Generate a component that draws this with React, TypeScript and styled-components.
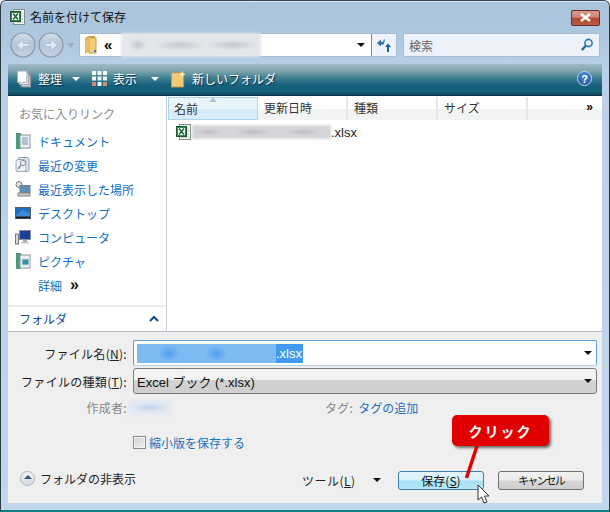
import styled, { createGlobalStyle } from "styled-components";

const GlobalStyle = createGlobalStyle`
  html, body { margin: 0; padding: 0; background: #fff; }
  * { box-sizing: border-box; }
  body { font-family: "Noto Sans CJK JP", "Liberation Sans", sans-serif; font-size: 12px; }
`;

function ExcelIcon({ size = 16 }: { size?: number }) {
  return (
    <svg width={size} height={size} viewBox="0 0 16 16">
      <rect x="3.500" y="0.500" width="11" height="15" fill="#f4f6f4" stroke="#7f8f8a" />
      <path d="M5 4h8M5 7h8M5 10h8M5 13h8M9 2v12" stroke="#b9c6c0" />
      <rect x="0.500" y="2.500" width="10" height="10" fill="#2f8a4c" stroke="#1d5a30" />
      <rect x="2" y="4" width="7" height="7" fill="#fff" />
      <path d="M3 4.500l5 6M8 4.500l-5 6" stroke="#14662f" strokeWidth="1.5" />
    </svg>
  );
}

function FolderIcon() {
  return (
    <svg width="17" height="19" viewBox="0 0 17 19">
      <path d="M1 2l4-2h6v16H1z" fill="#c9a04e" />
      <path d="M5 2h7v15H5z" fill="#f3cf79" stroke="#c69c4d" />
      <path d="M1 3l5-2v15l-5 2z" fill="#e6bd64" />
      <rect x="10" y="14" width="2" height="2" fill="#3a7fd0" />
    </svg>
  );
}

function NavCircle({ flip }: { flip?: boolean }) {
  return (
    <svg width="26" height="26" viewBox="0 0 26 26">
      <defs>
        <linearGradient id="navg" x1="0" y1="0" x2="0" y2="1">
          <stop offset="0" stopColor="#d3deea" />
          <stop offset="0.5" stopColor="#b4c5d8" />
          <stop offset="1" stopColor="#c3d2e2" />
        </linearGradient>
      </defs>
      <circle cx="13" cy="13" r="12" fill="url(#navg)" stroke="#8b97a4" strokeWidth="1.2" />
      <path
        d={flip ? "M7 11.500h6v-4l6 5.500-6 5.500v-4H7z" : "M19 11.500h-6v-4L7 13l6 5.500v-4h6z"}
        fill="#e3eaf2"
        stroke="#a5b5c6"
        strokeWidth="0.6"
      />
    </svg>
  );
}

function Search() {
  return (
    <svg width="14" height="14" viewBox="0 0 14 14">
      <circle cx="8.500" cy="5" r="3.600" fill="#e8f2fb" stroke="#2f79b5" strokeWidth="1.6" />
      <path d="M5.800 7.800L1.800 12" stroke="#1d5f96" strokeWidth="2.2" />
    </svg>
  );
}

function Refresh() {
  return (
    <svg width="16" height="16" viewBox="0 0 16 16">
      <path d="M1 6l4-3.500V5h2l1-3 1 1-1.500 4.500H5v2z" fill="#2b6fae" />
      <path d="M15 10l-3-3.500L9 10h2v5h2v-5z" fill="#1f5f9c" />
    </svg>
  );
}

function SideIcon({ kind }: { kind: string }) {
  if (kind === "doc" || kind === "pic") {
    return (
      <svg width="16" height="16" viewBox="0 0 16 16">
        <rect x="1" y="0" width="5" height="16" fill="#4e9a78" />
        <rect x="5" y="2" width="10" height="13" fill="#eef2f4" stroke="#8b98a2" />
        {kind === "doc" ? (
          <path d="M7 5h6M7 7h6M7 9h6M7 11h6" stroke="#6f8fa8" />
        ) : (
          <rect x="7" y="6" width="7" height="6" fill="#3a8fa8" stroke="#cfe0e6" />
        )}
      </svg>
    );
  }
  if (kind === "recent") {
    return (
      <svg width="16" height="16" viewBox="0 0 16 16">
        <rect x="3" y="0.500" width="11" height="14" rx="2" fill="#dfe7f0" stroke="#8c9db2" />
        <rect x="1" y="2.500" width="10" height="12" rx="2" fill="#eef3f8" stroke="#98a8ba" />
        <circle cx="8" cy="6" r="2.600" fill="none" stroke="#7d8fa4" />
        <path d="M6 8l-3 4" stroke="#7d8fa4" strokeWidth="1.4" />
      </svg>
    );
  }
  if (kind === "place") {
    return (
      <svg width="16" height="16" viewBox="0 0 16 16">
        <circle cx="4" cy="3.500" r="3" fill="#dfe2e4" stroke="#777" />
        <rect x="5" y="4.500" width="10" height="7" fill="#5d8fb8" stroke="#7a7f84" />
        <rect x="3" y="12" width="12" height="3" fill="#c8ccd0" stroke="#808488" />
      </svg>
    );
  }
  if (kind === "desk") {
    return (
      <svg width="16" height="16" viewBox="0 0 16 16">
        <rect x="0.500" y="2.500" width="15" height="11" fill="#1f6fc0" stroke="#555e66" />
        <path d="M1 11l6-6 8 3v5H1z" fill="#3b8bd6" />
        <rect x="1" y="11.500" width="14" height="2" fill="#222" />
      </svg>
    );
  }
  return (
    <svg width="16" height="16" viewBox="0 0 16 16">
      <rect x="0.500" y="5" width="3" height="10" fill="#d8dadc" stroke="#777" />
      <rect x="4.500" y="1.500" width="11" height="9" fill="#1b3f9a" stroke="#8a8f94" />
      <rect x="8" y="11" width="4" height="2" fill="#a8acb0" />
      <rect x="6" y="13" width="8" height="1.500" fill="#c6c9cc" />
    </svg>
  );
}

const items = [
  { kind: "doc", label: "ドキュメント" },
  { kind: "recent", label: "最近の変更" },
  { kind: "place", label: "最近表示した場所" },
  { kind: "desk", label: "デスクトップ" },
  { kind: "pc", label: "コンピュータ" },
  { kind: "pic", label: "ピクチャ" },
];

const columns = [
  { label: "名前", active: true },
  { label: "更新日時" },
  { label: "種類" },
  { label: "サイズ" },
];

export default function App() {
  return (
    <>
      <GlobalStyle />
      <Window>
        <TitleBar>
          <ExcelIcon />
          <Title>名前を付けて保存</Title>
          <CloseButton>
            <svg width="13" height="9" viewBox="0 0 13 9">
              <path d="M2 1l9 7M11 1L2 8" stroke="#fff" strokeWidth="2.4" />
            </svg>
          </CloseButton>
        </TitleBar>

        <NavBar>
          <NavButtons>
            <NavCircle />
            <NavCircle flip />
            <SmallCaret />
          </NavButtons>
          <AddressBox>
            <FolderIcon />
            <Chevrons>«</Chevrons>
            <BlurredPath />
            <AddressEnd>
              <DarkCaret />
            </AddressEnd>
            <RefreshCell>
              <Refresh />
            </RefreshCell>
          </AddressBox>
          <SearchBox>
            <span>検索</span>
            <Search />
          </SearchBox>
        </NavBar>

        <Toolbar>
          <ToolItem>
            <svg width="15" height="18" viewBox="0 0 16 18">
              <rect x="4.500" y="5.500" width="10" height="12" fill="#c9ccd0" stroke="#8d9298" />
              <rect x="2.500" y="3" width="10" height="12" fill="#e4e6e9" stroke="#9da2a8" />
              <rect x="0.500" y="0.500" width="10" height="12" fill="#fff" stroke="#aab0b6" />
            </svg>
            <span>整理</span>
            <WhiteCaret $left={4} />
          </ToolItem>
          <ToolItem>
            <svg width="15" height="15" viewBox="0 0 15 15">
              <path d="M0 0h4v4H0zM5.500 0h4v4h-4zM11 0h4v4h-4zM0 5.500h4v4H0zM5.500 5.500h4v4h-4zM11 5.500h4v4h-4zM0 11h4v4H0zM5.500 11h4v4h-4zM11 11h4v4h-4z" fill="#f4f4f4" />
              <path d="M11 11h4v4h-4zM0 11h4v4H0z" fill="#d28a78" />
            </svg>
            <span>表示</span>
            <WhiteCaret $left={8} />
          </ToolItem>
          <ToolItem>
            <svg width="15" height="18" viewBox="0 0 16 18">
              <rect x="0.500" y="2.500" width="13" height="15" fill="#f0cb74" stroke="#c39a4a" />
              <path d="M12 0l1 3 3 1-3 1-1 3-1-3-3-1 3-1z" fill="#fff3c4" />
            </svg>
            <span>新しいフォルダ</span>
          </ToolItem>
          <HelpIcon>?</HelpIcon>
        </Toolbar>

        <Content>
          <Sidebar>
            <SideTitle>お気に入りリンク</SideTitle>
            <SideList>
              {items.map((item) => (
                <SideItem key={item.kind}>
                  <SideIcon kind={item.kind} />
                  <span>{item.label}</span>
                </SideItem>
              ))}
              <SideItem>
                <IconSpacer />
                <span>詳細</span>
                <MoreMark>»</MoreMark>
              </SideItem>
            </SideList>
            <FolderToggle>
              <span>フォルダ</span>
              <svg width="10" height="7" viewBox="0 0 10 7">
                <path d="M1 6l4-4 4 4" fill="none" stroke="#0a4a96" strokeWidth="2" />
              </svg>
            </FolderToggle>
          </Sidebar>
          <FileArea>
            <Header>
              {columns.map((col) => (
                <HeaderCell key={col.label} $active={col.active}>
                  {col.active && <SortMark />}
                  {col.label}
                </HeaderCell>
              ))}
              <HeaderRest>»</HeaderRest>
            </Header>
            <FileRow>
              <ExcelIcon />
              <BlurredName />
              <span>.xlsx</span>
            </FileRow>
          </FileArea>
        </Content>

        <Bottom>
          <FormRow>
            <FieldLabel>
              ファイル名(<u>N</u>):
            </FieldLabel>
            <NameInput>
              <Selection>
                <SelectionBlur />
                <span>.xlsx</span>
              </Selection>
              <DarkCaret />
            </NameInput>
          </FormRow>
          <FormRow>
            <FieldLabel>
              ファイルの種類(<u>T</u>):
            </FieldLabel>
            <TypeSelect>
              <span>Excel ブック (*.xlsx)</span>
              <DarkCaret />
            </TypeSelect>
          </FormRow>
          <MetaRow>
            <MetaLabel>作成者:</MetaLabel>
            <MetaAuthor />
            <MetaTag>タグ:</MetaTag>
            <LinkText>タグの追加</LinkText>
          </MetaRow>
          <ThumbRow>
            <Check />
            <LinkText>縮小版を保存する</LinkText>
          </ThumbRow>
          <ActionRow>
            <HideFolders>
              <HideIcon />
              <span>フォルダの非表示</span>
            </HideFolders>
            <Tools>
              <span>
                ツール(<u>L</u>)
              </span>
              <DarkCaret />
            </Tools>
            <DialogButton $primary>
              保存(<u>S</u>)
            </DialogButton>
            <DialogButton>
              <CancelText>キャンセル</CancelText>
            </DialogButton>
          </ActionRow>
        </Bottom>

        <Callout>クリック</Callout>
        <CalloutLine width="30" height="40" viewBox="0 0 30 40">
          <path d="M20 0L9.500 32" stroke="#e00000" strokeWidth="3.500" />
        </CalloutLine>
        <Cursor width="13" height="20" viewBox="0 0 13 20">
          <path d="M1 1v15l3.500-3 2.500 6 3-1-2.500-6H12z" fill="#fff" stroke="#333" />
        </Cursor>
      </Window>
    </>
  );
}

const Window = styled.div`
  position: relative;
  width: 610px;
  height: 512px;
  overflow: hidden;
  padding: 0 7px;
  display: flex;
  flex-direction: column;
  border: 1px solid #2c3a40;
  border-top-color: #3a4450;
  border-bottom: 2px solid #0f7f86;
  border-radius: 6px 6px 0 0;
  background: linear-gradient(#a9c3dd 0, #afc8e2 40px, #b9d0e8 70px, #c2d6ec 100%);
  box-shadow: inset 0 1px 0 #dfe9f3;
`;

const TitleBar = styled.div`
  height: 31px;
  display: flex;
  align-items: center;
  gap: 4px;
  padding: 0 2px;
  color: #111;
`;

const Title = styled.span`
  flex: 1;
`;

const CloseButton = styled.div`
  width: 29px;
  height: 16px;
  margin-top: 2px;
  display: flex;
  align-items: center;
  justify-content: center;
  border: 1px solid #6a2a28;
  border-radius: 2px;
  background: linear-gradient(#d99a8f 0, #d08478 45%, #b04a30 50%, #b85a40 100%);
`;

const NavBar = styled.div`
  height: 26px;
  display: flex;
`;

const NavButtons = styled.div`
  width: 71px;
  display: flex;
  align-items: center;
  gap: 2px;
  padding-left: 2px;
`;

const SmallCaret = styled.i`
  width: 0;
  height: 0;
  margin-left: 1px;
  border: 4px solid transparent;
  border-top: 5px solid #a0aebd;
  border-bottom: 0;
`;

const AddressBox = styled.div`
  width: 318px;
  height: 24px;
  margin: 1px 6px 0 0;
  display: flex;
  align-items: center;
  padding-left: 4px;
  border: 1px solid #a8bbcf;
  border-radius: 2px;
  background: #fff;
`;

const Chevrons = styled.span`
  width: 17px;
  margin-left: 3px;
  font-family: "Liberation Sans", sans-serif;
  font-size: 15px;
  font-weight: bold;
  line-height: 14px;
`;

const BlurredPath = styled.div`
  width: 140px;
  height: 24px;
  background:
    radial-gradient(ellipse 9px 6px at 12% 50%, #c2c6cc, transparent),
    radial-gradient(ellipse 26px 5px at 42% 50%, #c2c6cc, transparent),
    radial-gradient(ellipse 26px 5px at 80% 50%, #c2c6cc, transparent),
    #e3e7ec;
  filter: blur(1px);
`;

const AddressEnd = styled.div`
  flex: 1;
  display: flex;
  justify-content: flex-end;
  padding-right: 6px;
`;

const RefreshCell = styled.div`
  width: 25px;
  height: 22px;
  display: flex;
  align-items: center;
  justify-content: center;
  border-left: 1px solid #7d8a98;
  background: #eef2fa;
`;

const SearchBox = styled.div`
  width: 197px;
  height: 24px;
  margin-top: 1px;
  display: flex;
  align-items: center;
  justify-content: space-between;
  padding: 0 5px;
  color: #666;
  border: 1px solid #a8bbcf;
  border-radius: 2px;
  background: #edf1fa;
`;

const Toolbar = styled.div`
  height: 32px;
  margin-top: 6px;
  display: flex;
  align-items: center;
  gap: 12px;
  padding: 0 9px 2px 9px;
  color: #fff;
  text-shadow: 1px 1px 1px #0b2c40;
  background: linear-gradient(#9fbcc6 0, #7fa5ae 22%, #3f7f90 45%, #17607c 68%, #15647a 85%, #0f4a62 100%);
  border-bottom: 1px solid #0b3040;
`;

const ToolItem = styled.div`
  display: flex;
  align-items: center;
  gap: 6px;
`;

const WhiteCaret = styled.i<{ $left: number }>`
  width: 0;
  height: 0;
  margin-left: ${(p) => p.$left}px;
  border: 4px solid transparent;
  border-top: 4px solid #fff;
  border-bottom: 0;
`;

const HelpIcon = styled.div`
  width: 15px;
  height: 15px;
  margin-left: auto;
  margin-right: 1px;
  display: flex;
  align-items: center;
  justify-content: center;
  border-radius: 50%;
  border: 1px solid #c7d8e8;
  background: radial-gradient(circle at 50% 30%, #4f8fd8, #1a4a9a);
  font-family: "Liberation Sans", sans-serif;
  font-size: 11px;
  font-weight: bold;
  text-shadow: none;
`;

const Content = styled.div`
  height: 235px;
  display: flex;
  background: #fff;
`;

const Sidebar = styled.div`
  width: 159px;
  display: flex;
  flex-direction: column;
  border-right: 1px solid #c9ced4;
`;

const SideTitle = styled.div`
  height: 33px;
  padding: 9px 0 0 11px;
  color: #8c8c8c;
`;

const SideList = styled.div`
  flex: 1;
  display: flex;
  flex-direction: column;
`;

const SideItem = styled.div`
  height: 24px;
  display: flex;
  align-items: center;
  gap: 7px;
  padding-left: 7px;
  color: #0f6fc6;
`;

const IconSpacer = styled.div`
  width: 16px;
`;

const MoreMark = styled.b`
  margin-left: 1px;
  color: #111;
  font-family: "Liberation Sans", sans-serif;
  font-size: 16px;
  line-height: 14px;
`;

const FolderToggle = styled.div`
  height: 26px;
  display: flex;
  align-items: center;
  justify-content: space-between;
  padding: 0 7px 2px 11px;
  color: #0a4a96;
  border-top: 2px solid #eeeeee;
`;

const FileArea = styled.div`
  flex: 1;
  display: flex;
  flex-direction: column;
`;

const Header = styled.div`
  height: 24px;
  display: flex;
  padding: 1px 0 0 1px;
`;

const HeaderCell = styled.div<{ $active?: boolean }>`
  position: relative;
  width: 90px;
  height: 23px;
  padding: 2px 0 0 6px;
  color: #333;
  border-right: 2px solid #e4e6e8;
  background: ${(p) =>
    p.$active
      ? "linear-gradient(#e9f4fb 0, #e9f4fb 50%, #d9ecf7 50%, #d9ecf7 100%)"
      : "linear-gradient(#fff 0, #fff 50%, #f2f3f3 50%, #f2f3f3 100%)"};
  ${(p) => (p.$active ? "border: 1px solid #a8d5ef; padding-left: 5px;" : "")}
`;

const SortMark = styled.i`
  position: absolute;
  top: 0;
  left: 40px;
  width: 0;
  height: 0;
  border: 4px solid transparent;
  border-top: 0;
  border-bottom: 4px solid #a8c4d4;
`;

const HeaderRest = styled.div`
  flex: 1;
  height: 23px;
  padding: 3px 9px 0 0;
  text-align: right;
  font-family: "Liberation Sans", sans-serif;
  font-size: 12px;
  font-weight: bold;
  background: linear-gradient(#fff 0, #fff 50%, #f2f3f3 50%, #f2f3f3 100%);
`;

const FileRow = styled.div`
  display: flex;
  align-items: center;
  height: 18px;
  margin-top: 3px;
  padding-left: 9px;
  font-family: "Liberation Sans", sans-serif;
  font-size: 13px;
  color: #222;
`;

const BlurredName = styled.div`
  width: 139px;
  height: 14px;
  background:
    radial-gradient(ellipse 14px 3px at 12% 50%, #b4b6ba, transparent),
    radial-gradient(ellipse 18px 3px at 44% 50%, #b4b6ba, transparent),
    radial-gradient(ellipse 18px 3px at 80% 50%, #b4b6ba, transparent),
    #d4d6da;
  filter: blur(1px);
`;

const Bottom = styled.div`
  height: 172px;
  padding: 8px 5px 0 5px;
  display: flex;
  flex-direction: column;
  gap: 2px;
  background: #efefef;
  border-top: 1px solid #b4c0ca;
`;

const FormRow = styled.div`
  display: flex;
  align-items: center;
  gap: 6px;
`;

const FieldLabel = styled.label`
  width: 114px;
  text-align: right;
  color: #222;
  white-space: nowrap;
  letter-spacing: 0.3px;
`;

const NameInput = styled.div`
  flex: 1;
  height: 26px;
  display: flex;
  align-items: center;
  justify-content: space-between;
  padding: 0 4px 0 3px;
  background: #fff;
  border: 1px solid #5d9fd4;
  border-bottom-color: #b7d3e8;
  border-radius: 2px;
`;

const Selection = styled.div`
  height: 19px;
  display: flex;
  align-items: center;
  color: #fff;
  background: #3f9af0;
  font-family: "Liberation Sans", sans-serif;
  font-size: 13px;
  padding-right: 1px;
`;

const SelectionBlur = styled.div`
  width: 139px;
  height: 19px;
  background:
    radial-gradient(ellipse 11px 8px at 23% 50%, #4f9ff0, transparent),
    radial-gradient(ellipse 11px 8px at 57% 50%, #4f9ff0, transparent),
    #7dbaf3;
`;

const TypeSelect = styled.div`
  flex: 1;
  height: 26px;
  display: flex;
  align-items: center;
  justify-content: space-between;
  padding: 0 4px 0 3px;
  color: #111;
  font-size: 13px;
  border: 1px solid #7b7b7b;
  border-radius: 3px;
  background: linear-gradient(#f2f2f2 0, #f2f2f2 45%, #d2d2d2 45%, #cfcfcf 100%);
  font-family: "Liberation Sans", "Noto Sans CJK JP", sans-serif;
`;

const DarkCaret = styled.i`
  width: 0;
  height: 0;
  border: 4px solid transparent;
  border-top: 4px solid #111;
  border-bottom: 0;
`;

const MetaRow = styled.div`
  height: 18px;
  margin-top: 2px;
  display: flex;
  align-items: center;
  color: #888;
`;

const MetaLabel = styled.span`
  width: 114px;
  text-align: right;
  letter-spacing: 0.3px;
`;

const MetaAuthor = styled.div`
  width: 44px;
  height: 15px;
  margin-left: 1px;
  background: radial-gradient(ellipse 18px 4px at 50% 50%, #b8d0ec, transparent), #e2e9f2;
  filter: blur(1px);
`;

const MetaTag = styled.span`
  margin-left: 153px;
  margin-right: 5px;
  letter-spacing: 0.3px;
`;

const LinkText = styled.span`
  color: #1f6fc0;
`;

const ThumbRow = styled.div`
  height: 18px;
  margin-top: 15px;
  padding-left: 120px;
  display: flex;
  align-items: center;
  gap: 3px;
`;

const Check = styled.div`
  width: 13px;
  height: 13px;
  border: 1px solid #8a8a8a;
  background: linear-gradient(135deg, #d0d0d0, #f0f0f0);
  box-shadow: inset 0 0 0 1px #f4f4f4;
`;

const ActionRow = styled.div`
  height: 20px;
  margin-top: 17px;
  display: flex;
  align-items: center;
`;

const HideFolders = styled.div`
  width: 289px;
  margin-bottom: 3px;
  display: flex;
  align-items: center;
  gap: 5px;
  padding-left: 7px;
  color: #222;
`;

const HideIcon = styled.div`
  position: relative;
  width: 15px;
  height: 15px;
  border-radius: 50%;
  border: 1px solid #a9b4c0;
  background: linear-gradient(#f4f6f9, #d3dae2);

  &::after {
    content: "";
    position: absolute;
    left: 2.5px;
    top: 3px;
    border: 4px solid transparent;
    border-top: 0;
    border-bottom: 4px solid #35557c;
  }
`;

const Tools = styled.div`
  width: 96px;
  display: flex;
  align-items: center;
  gap: 17px;
  color: #222;
  letter-spacing: 0.5px;
`;

const DialogButton = styled.div<{ $primary?: boolean }>`
  width: 86px;
  height: 19px;
  margin-right: ${(p) => (p.$primary ? 14 : 0)}px;
  display: flex;
  align-items: center;
  justify-content: center;
  color: #111;
  border-radius: 3px;
  border: 1px solid ${(p) => (p.$primary ? "#3f7fa8" : "#707070")};
  background: ${(p) =>
    p.$primary
      ? "linear-gradient(#e6f5fc 0, #d8f0fa 45%, #a8e0f6 55%, #b8e8f8 100%)"
      : "linear-gradient(#f2f2f2 0, #ebebeb 45%, #d6d6d6 55%, #cfcfcf 100%)"};
`;

const CancelText = styled.span`
  font-size: 11px;
  letter-spacing: -1.800px;
`;

const Callout = styled.div`
  position: absolute;
  left: 451px;
  top: 414px;
  width: 97px;
  height: 31px;
  display: flex;
  align-items: center;
  justify-content: center;
  color: #fff;
  font-size: 14px;
  font-weight: bold;
  letter-spacing: 2px;
  border-radius: 5px;
  background: #e00000;
  box-shadow: 2px 2px 3px #666;
`;

const CalloutLine = styled.svg`
  position: absolute;
  left: 456px;
  top: 445px;
`;

const Cursor = styled.svg`
  position: absolute;
  left: 476px;
  top: 483px;
`;
